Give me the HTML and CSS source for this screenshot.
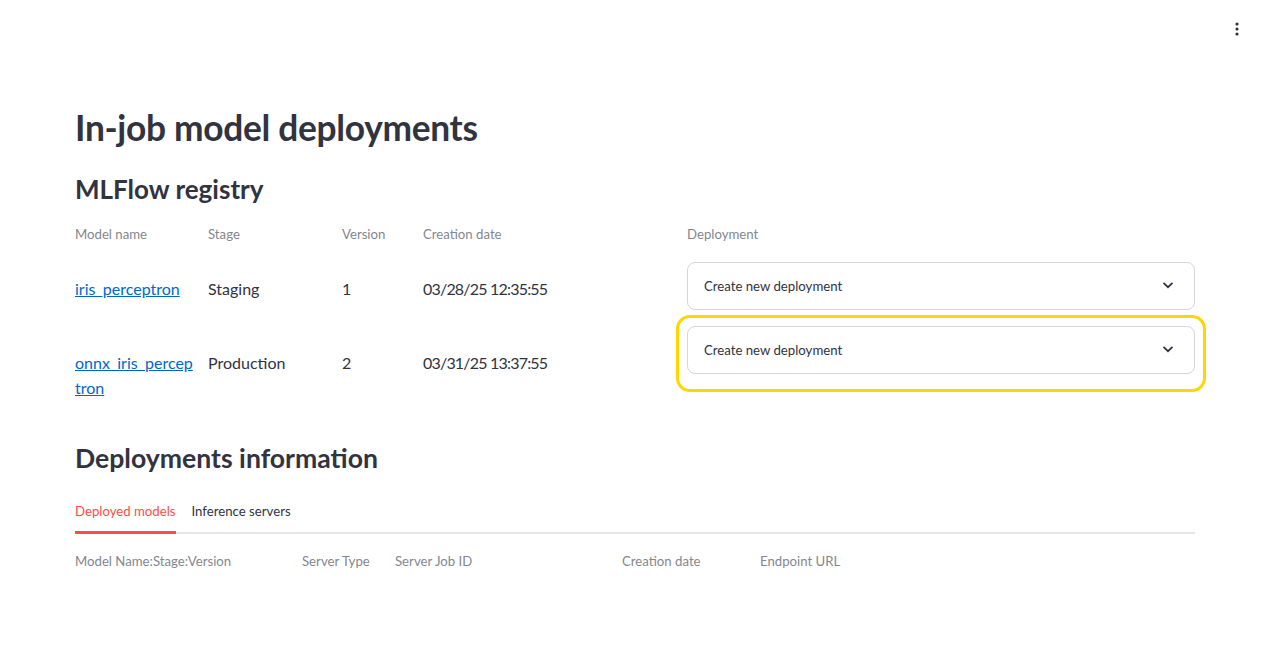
FILE: index.html
```html
<!DOCTYPE html>
<html lang="en">
<head>
<meta charset="utf-8">
<title>In-job model deployments</title>
<link rel="stylesheet" href="styles.css">
</head>
<body>
<div class="toolbar">
  <button class="kebab" aria-label="Main menu">
    <svg width="4" height="14" viewBox="0 0 4 14"><circle cx="2" cy="2" r="1.6"/><circle cx="2" cy="7" r="1.6"/><circle cx="2" cy="12" r="1.6"/></svg>
  </button>
</div>
<main class="main">
  <h1 class="title">In-job model deployments</h1>
  <h2 class="subtitle sub-first">MLFlow registry</h2>

  <div class="reg-grid reg-head">
    <div class="label">Model name</div>
    <div class="label">Stage</div>
    <div class="label">Version</div>
    <div class="label">Creation date</div>
    <div></div>
    <div class="label">Deployment</div>
  </div>

  <div class="reg-grid reg-row row-one">
    <div class="cell"><a href="#" class="link">iris_perceptron</a></div>
    <div class="cell">Staging</div>
    <div class="cell num">1</div>
    <div class="cell num">03/28/25 12:35:55</div>
    <div></div>
    <div class="select-wrap">
      <div class="select"><span>Create new deployment</span><svg class="chev" width="12" height="8" viewBox="0 0 12 8"><path d="M1.5 1.8 L6 6.2 L10.5 1.8" fill="none" stroke="#31333f" stroke-width="1.8"/></svg></div>
    </div>
  </div>

  <div class="reg-grid reg-row row-two">
    <div class="cell"><a href="#" class="link">onnx_iris_percep tron</a></div>
    <div class="cell">Production</div>
    <div class="cell num">2</div>
    <div class="cell num">03/31/25 13:37:55</div>
    <div></div>
    <div class="select-wrap">
      <div class="select"><span>Create new deployment</span><svg class="chev" width="12" height="8" viewBox="0 0 12 8"><path d="M1.5 1.8 L6 6.2 L10.5 1.8" fill="none" stroke="#31333f" stroke-width="1.8"/></svg></div>
      <div class="highlight"></div>
    </div>
  </div>

  <h2 class="subtitle sub-second">Deployments information</h2>

  <div class="tabs">
    <div class="tab active">Deployed models</div>
    <div class="tab">Inference servers</div>
  </div>

  <div class="dep-head">
    <div class="label">Model Name:Stage:Version</div>
    <div class="label">Server Type</div>
    <div class="label">Server Job ID</div>
    <div class="label">Creation date</div>
    <div class="label">Endpoint URL</div>
  </div>
</main>
</body>
</html>
```

FILE: styles.css
```css
* { box-sizing: border-box; }
html, body { margin: 0; padding: 0; background: #ffffff; }
body {
  font-family: "Lato", "Liberation Sans", sans-serif;
  color: #31333f;
  width: 1268px;
  height: 657px;
  overflow: hidden;
}
.toolbar {
  height: 60px;
  display: flex;
  justify-content: flex-end;
  align-items: flex-start;
  padding: 22px 26px 0 0;
}
.kebab {
  border: 0;
  background: transparent;
  padding: 0;
  width: 10px;
  height: 14px;
  display: flex;
  justify-content: center;
  fill: #31333f;
}
.main {
  width: 1120px;
  margin-left: 75px;
}
.title {
  margin: 45px 0 0 0;
  font-size: 35.3px;
  line-height: 46px;
  font-weight: 700;
  letter-spacing: -0.3px;
}
.subtitle {
  margin: 0;
  font-size: 26px;
  line-height: 32px;
  font-weight: 700;
}
.sub-first { margin-top: 22px; }
.sub-second { margin-top: 42px; font-size: 26.6px; }
.reg-grid {
  display: grid;
  grid-template-columns: 133px 134px 81px 190px 74px 508px;
}
.reg-head { margin-top: 19px; }
.label {
  font-size: 13.2px;
  line-height: 20px;
  color: #85878e;
}
.reg-row { align-items: start; }
.row-one { margin-top: 18px; }
.row-two { margin-top: 16px; }
.cell {
  font-size: 16px;
  line-height: 25px;
}
.cell.num { letter-spacing: -0.8px; }
.row-one .cell { padding-top: 14px; }
.row-two .cell { padding-top: 24px; }
.link {
  color: #0068c9;
  text-decoration: underline;
  display: block;
  width: 118px;
}
.select-wrap { position: relative; }
.select {
  height: 48px;
  border: 1px solid #d6d6d9;
  border-radius: 8px;
  display: flex;
  align-items: center;
  justify-content: space-between;
  padding: 0 20px 0 16px;
  font-size: 13.2px;
}
.chev { margin-top: -2px; }
.highlight {
  position: absolute;
  left: -11px;
  top: -11px;
  width: 530px;
  height: 77px;
  border: 3px solid #ffd600;
  border-radius: 14px;
  pointer-events: none;
}
.tabs {
  margin-top: 27px;
  display: flex;
  gap: 16px;
  border-bottom: 2px solid #e6e6e9;
}
.tab {
  font-size: 13.2px;
  line-height: 20px;
  padding: 0 0 11px 0;
  color: #31333f;
  position: relative;
}
.tab.active { color: #ff4b4b; }
.tab.active::after {
  content: "";
  position: absolute;
  left: 0;
  right: 0;
  bottom: -2px;
  height: 3px;
  background: #ff4b4b;
}
.dep-head {
  display: grid;
  grid-template-columns: 227px 93px 227px 138px 200px;
  margin-top: 17px;
}
```
